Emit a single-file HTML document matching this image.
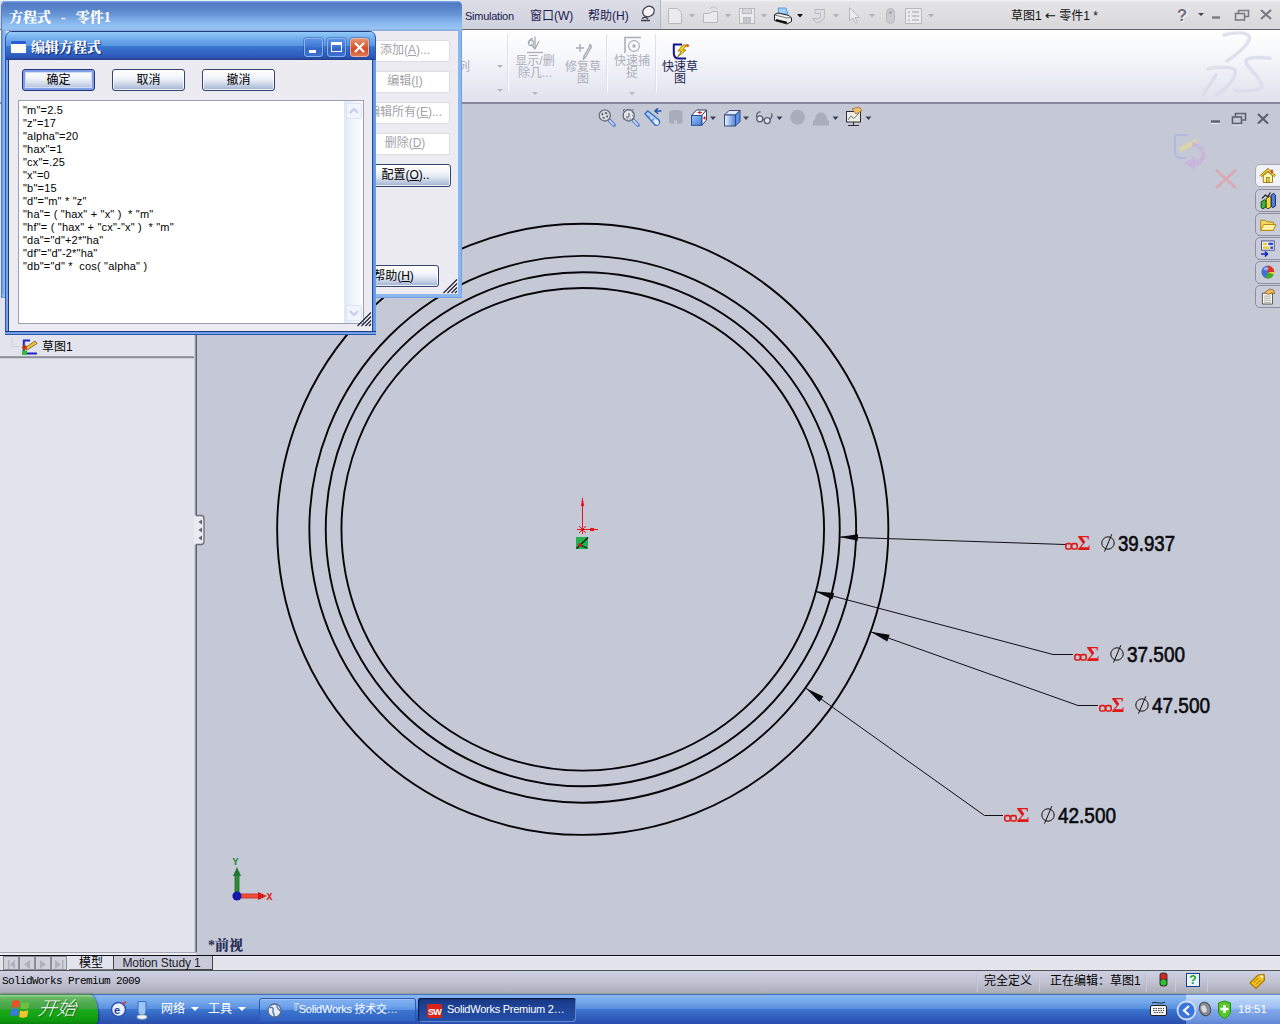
<!DOCTYPE html>
<html><head><meta charset="utf-8">
<style>
html,body{margin:0;padding:0;}
body{width:1280px;height:1024px;overflow:hidden;position:relative;background:#c5c9d6;font-family:"Liberation Sans","Noto Sans CJK SC",sans-serif;font-size:12px;color:#000;}
.abs,.abs-all *{position:absolute;}
div,span,svg{position:absolute;box-sizing:border-box;}
#menubar{left:0;top:0;width:1280px;height:30px;background:linear-gradient(#f4f4f6 0,#e4e4e6 2px,#d8d8dc);border-bottom:1px solid #606168;}
#menuleft{left:0;top:0;width:661px;height:29px;background:linear-gradient(#dcdde6,#cfd1dd);border-right:1px solid #b5b6c0;}
.menutxt{top:9px;color:#1b2050;font-size:12px;line-height:14px;white-space:nowrap;}
#toolbar{left:0;top:30px;width:1280px;height:74px;background:linear-gradient(#ffffff 0%,#f6f7fb 35%,#e6e8f1 80%,#dfe1ec 100%);border-bottom:2px solid #85879a;}
.tbsep{top:8px;height:58px;background:#dfe1ea;border-right:1px solid #fbfbff;width:2px;}
.tbl{color:#a9abb3;font-size:12px;line-height:13px;text-align:center;white-space:nowrap;}
#viewport{left:197px;top:104px;width:1083px;height:852px;background:#c5c9d6;}
#leftpanel{left:0;top:104px;width:197px;height:849px;border-bottom:1px solid #a4a6b2;background:linear-gradient(90deg,#e1e4ed 0,#e1e4ed 194px,#b8bac8 195px,#6a6c78 196px,#54565f 197px);}
#tabbar{left:0;top:955px;width:1280px;height:16px;background:linear-gradient(#f0f2f8 0,#e2e4ec 2px,#e4e6ec 100%);border-top:1px solid #0c0c14;}
#statusbar{left:0;top:970px;width:1280px;height:24px;background:linear-gradient(#cdd0e0 0,#c8cadc 5px,#bfc1d0 12px,#b2b4c0 18px,#adafb8 21px,#929c9f 23px);border-top:1px solid #50525c;}
#taskbar{left:0;top:994px;width:1280px;height:30px;background:linear-gradient(#2a4aa8 0,#86b6f0 1.5px,#7cb0ee 5px,#6a9fe6 10px,#5a8fe0 14.5px,#3b76cf 15.5px,#3568c4 20px,#2d57b6 26px,#2a4eae 30px);}

#dlg1{left:2px;top:0;width:460px;height:298px;background:#ecebf1;border:0;border-radius:6px 6px 0 0;box-shadow:-1px 0 0 #5a7cc0;}
#dlg1 .tb{left:0;top:0;width:460px;height:30.5px;border-radius:6px 6px 0 0;background:linear-gradient(#86aae4 0,#7ea4e2 1.5px,#5078c2 3px,#5a86cc 9px,#6896d6 15px,#78a6e2 18px,#8cbaf0 24px,#98c4f4 29px,#88ace0 30px);}
#dlg1 .tt{left:7px;top:9.5px;font-family:"Liberation Serif","Noto Serif CJK SC",serif;font-weight:900;font-size:14px;line-height:16px;color:#fff;white-space:pre;letter-spacing:0px;word-spacing:6.5px;}
#dlg1 .bl{left:0;top:30px;width:4px;height:268px;background:linear-gradient(90deg,#6a94dc,#8cb8f0 50%,#8cb8f0);}
#dlg1 .br{left:456px;top:30px;width:4px;height:268px;background:linear-gradient(90deg,#8cb8f0,#8cb8f0 60%,#6a94dc);}
#dlg1 .bb{left:0;top:294px;width:460px;height:4px;background:linear-gradient(#8cb8f0,#8cb8f0 60%,#6a94dc);}
.dbtn{left:358px;width:90px;height:22px;background:#fff;border:1px solid #dedce4;border-radius:2px;color:#a3a3a8;font-size:12px;line-height:19px;text-align:center;white-space:nowrap;overflow:hidden;}
.xbtn{height:22px;border:1px solid #34446a;border-radius:3px;background:linear-gradient(#ffffff 0%,#f4f6fa 35%,#dfe5f0 58%,#bcc9e0 82%,#9cafd2 100%);box-shadow:inset 0 0 0 1px rgba(255,255,255,.8);font-size:12px;line-height:20px;text-align:center;color:#000;white-space:nowrap;}
#dlg2{left:5px;top:31px;width:371px;height:304px;background:#ecebf1;border-radius:7px 7px 0 0;}
#dlg2 .tb{left:0;top:0;width:371px;height:29px;border-radius:7px 7px 0 0;box-shadow:inset 1px 0 0 #2a58b0,inset -1px 0 0 #2a58b0;background:linear-gradient(#1c3c80 0,#1c3c80 1px,#92c8f8 1.5px,#7ab4f0 6px,#6aa4ea 10px,#5a98e4 14.5px,#3a78d0 15.5px,#3468c6 20px,#2e5cbc 25px,#2a50b0 27px,#243c80 29px);}
#dlg2 .tt{left:26px;top:9px;font-family:"Liberation Serif","Noto Serif CJK SC",serif;font-weight:900;font-size:14px;line-height:16px;color:#fff;white-space:nowrap;text-shadow:1px 1px 1px #0c2878;}
#dlg2 .bl{left:0;top:29px;width:4px;height:275px;background:linear-gradient(90deg,#2a58b0 0,#2a58b0 1px,#6e9ae4 1px,#86aaec 3px,#1c3c80 3px,#1c3c80 4px);}
#dlg2 .br{left:367px;top:29px;width:4px;height:275px;background:linear-gradient(90deg,#1c3c80 0,#2a58b0 1px,#5a90e0 1px,#6aa0e8 3.5px,#3a6cc8 4px);}
#dlg2 .bb{left:0;top:300px;width:371px;height:4px;background:linear-gradient(#1c3c80 0,#1c3c80 1px,#6e9ae4 1px,#7ea4e8 3px,#2a58b0 3px,#2a58b0 4px);}
.cap{top:7px;width:19px;height:19px;border:1px solid #86b2f0;border-radius:3px;background:linear-gradient(#5c92e4 0,#4078d6 45%,#3566c6 55%,#3c70d0 100%);box-shadow:0 0 0 1px rgba(30,60,140,.35);}
#ta{left:13px;top:69px;width:346px;height:224px;background:#fff;border:1px solid #9aa0b4;}
#ta pre{position:absolute;left:4px;top:3px;margin:0;font-family:"Liberation Sans",sans-serif;font-size:11px;line-height:13px;color:#000;letter-spacing:0.2px;}

.dd{width:0;height:0;border-left:3px solid transparent;border-right:3px solid transparent;border-top:3px solid #b4b6c0;}
.tl{color:#adafb8;font-size:12px;line-height:12px;margin-top:1px;white-space:nowrap;text-align:center;}
#lp-line{left:0;top:356px;width:194px;height:3px;background:linear-gradient(#a2a4ae,#8d8f99 50%,#eef0f6);}
.navb{top:0px;width:16px;height:14px;background:#cfd1db;border:1px solid #8b8d98;}
.tab{top:0;height:14px;font-size:12px;line-height:14px;text-align:center;white-space:nowrap;}
.sbt{top:1.5px;font-size:12px;line-height:16px;white-space:nowrap;color:#000;}
.sbsep{top:3px;width:2px;height:18px;border-left:1px solid #b8bac8;border-right:1px solid #d0d2de;opacity:.7;}
.tkb{top:4px;height:24px;border-radius:3px;color:#fff;font-size:11px;letter-spacing:-0.250px;line-height:23px;white-space:nowrap;overflow:hidden;}
</style></head>
<body>
<div id="menubar"><div id="menuleft"></div>
<span class="menutxt" style="left:465px;font-size:11px;letter-spacing:-0.25px;">Simulation</span>
<span class="menutxt" style="left:530px;">窗口(W)</span>
<span class="menutxt" style="left:588px;">帮助(H)</span>
<span class="menutxt" style="left:1011px;color:#111;">草图1 <span style="position:static;font-family:'DejaVu Sans',sans-serif;font-size:13px;line-height:12px;">←</span> 零件1 *</span>
</div>
<div id="toolbar"></div>
<div id="leftpanel"></div>
<div id="viewport"></div><div style="left:0;top:953px;width:196px;height:2px;background:#eceef4;"></div>
<svg id="vp" style="left:0;top:0;" width="1280" height="1024" viewBox="0 0 1280 1024">
<g fill="none" stroke="#05050a" stroke-width="1.9">
<circle cx="582.75" cy="529.3" r="305.6"/>
<circle cx="582.75" cy="529.3" r="273.4"/>
<circle cx="582.75" cy="529.3" r="257"/>
<circle cx="582.75" cy="529.3" r="241.3"/>
</g>
<g fill="none" stroke="#101014" stroke-width="1">
<polyline points="839,537 1065,544.5 1067,544.5"/>
<polyline points="815,591.3 1053,654.5 1073,654.5"/>
<polyline points="870.5,631.7 1078,705.5 1098,705.5"/>
<polyline points="806,688.3 984.5,815.5 1003,815.5"/>
</g>
<g fill="#0a0a0e" stroke="none">
<polygon points="839,537 858,534.2 858,540.8"/>
<polygon points="815,591.3 834.2,592.9 832.4,599.5"/>
<polygon points="870.5,631.7 889.6,634.8 887.3,641.4"/>
<polygon points="806,688.3 823.4,696.5 819.4,702.1"/>
</g>
<g font-family="'Liberation Sans',sans-serif" font-size="21.5" fill="#08080c" stroke="#08080c" stroke-width="0.6">
<text x="1118" y="550.5" textLength="57" lengthAdjust="spacingAndGlyphs">39.937</text>
<text x="1127" y="661.5" textLength="58" lengthAdjust="spacingAndGlyphs">37.500</text>
<text x="1152" y="712.5" textLength="58" lengthAdjust="spacingAndGlyphs">47.500</text>
<text x="1058" y="822.5" textLength="58" lengthAdjust="spacingAndGlyphs">42.500</text>
</g>
<g fill="none" stroke="#111" stroke-width="1">
<g transform="translate(1108,543)"><circle r="6.2"/><line x1="-3.5" y1="8.600" x2="3.800" y2="-8.800"/></g>
<g transform="translate(1117,654)"><circle r="6.2"/><line x1="-3.5" y1="8.600" x2="3.800" y2="-8.800"/></g>
<g transform="translate(1142,705)"><circle r="6.2"/><line x1="-3.5" y1="8.600" x2="3.800" y2="-8.800"/></g>
<g transform="translate(1048,815)"><circle r="6.2"/><line x1="-3.5" y1="8.600" x2="3.800" y2="-8.800"/></g>
</g>
<g font-family="'Liberation Serif',serif" font-weight="bold" fill="#e01818" font-size="20">
<text x="1077.5" y="550">Σ</text><text x="1086.5" y="661">Σ</text><text x="1111.5" y="712">Σ</text><text x="1016.5" y="822">Σ</text>
</g>
<g fill="none" stroke="#e01818" stroke-width="1.6">
<g transform="translate(1065,541)"><rect x="0.8" y="2.6" width="5.4" height="5.4" rx="1.6"/><rect x="6.8" y="2.6" width="5.4" height="5.4" rx="1.6"/></g>
<g transform="translate(1074,652)"><rect x="0.8" y="2.6" width="5.4" height="5.4" rx="1.6"/><rect x="6.8" y="2.6" width="5.4" height="5.4" rx="1.6"/></g>
<g transform="translate(1099,703)"><rect x="0.8" y="2.6" width="5.4" height="5.4" rx="1.6"/><rect x="6.8" y="2.6" width="5.4" height="5.4" rx="1.6"/></g>
<g transform="translate(1004,813)"><rect x="0.8" y="2.6" width="5.4" height="5.4" rx="1.6"/><rect x="6.8" y="2.6" width="5.4" height="5.4" rx="1.6"/></g>
</g>
<!-- origin -->
<g stroke="#e8141c" stroke-width="1" fill="#e8141c">
<line x1="582.5" y1="498" x2="582.5" y2="534"/>
<line x1="577" y1="529.5" x2="598" y2="529.5"/>
<line x1="579" y1="526" x2="586" y2="533"/><line x1="586" y1="526" x2="579" y2="533"/>
<polygon points="582.5,497 584.2,506 580.8,506" stroke="none"/>
<rect x="590" y="528" width="4" height="3" stroke="none"/>
</g>
<rect x="576" y="537" width="12" height="12" fill="#22b14c"/>
<path d="M576.5 548.5 L588 537.5 M580 545 L587 548" stroke="#111" stroke-width="1.2" fill="none"/>
<circle cx="580" cy="545" r="2" fill="#c0281c"/>
<!-- triad -->
<rect x="235" y="875" width="4" height="21" fill="#2e8b3a" stroke="#1c6a28" stroke-width="0.8"/>
<polygon points="237,867 241,876 233,876" fill="#1f7a2c"/>
<rect x="239" y="894" width="20" height="4" fill="#f05038" stroke="#d02020" stroke-width="0.8"/>
<polygon points="267,896 258,892 258,900" fill="#d81818"/>
<circle cx="237" cy="896" r="4.6" fill="#1418a8"/>
<text x="232.5" y="865" font-family="'Liberation Mono',monospace" font-size="10" font-weight="bold" fill="#1f8a34">Y</text>
<text x="266.5" y="900" font-family="'Liberation Mono',monospace" font-size="10" font-weight="bold" fill="#e01818">X</text>
<text x="208" y="950" font-family="'Liberation Serif','Noto Serif CJK SC',serif" font-size="14" font-weight="900" fill="#2a2f58">*前视</text>
</svg>
<div id="tabbar"></div>
<div id="statusbar"></div>
<div id="taskbar"></div>


<!-- toolbar content -->
<div id="tbc" style="left:0;top:0;width:1280px;height:103px;">
<span class="tl" style="left:458px;top:60px;">列</span>
<div class="dd" style="left:497px;top:65px;"></div><div class="dd" style="left:497px;top:89px;"></div>
<div class="tbsep" style="left:507px;top:34px;"></div>
<div class="tbsep" style="left:606px;top:34px;"></div>
<div class="tbsep" style="left:655px;top:34px;"></div>
<span class="tl" style="left:515px;top:54px;width:40px;">显示/删<br>除几...</span>
<div class="dd" style="left:532px;top:92px;"></div>
<span class="tl" style="left:564px;top:60px;width:38px;">修复草<br>图</span>
<span class="tl" style="left:613px;top:54px;width:38px;">快速捕<br>捉</span>
<div class="dd" style="left:629px;top:92px;"></div>
<span class="tl" style="left:661px;top:60px;width:38px;color:#1a1f50;">快速草<br>图</span>
<svg style="left:524px;top:35px" width="22" height="20"><g fill="none" stroke="#a9abb5" stroke-width="1.3"><path d="M3 17.5H19"/><path d="M11 14.5V1.5M7 9.5L11 14M15 6L11 14"/><circle cx="7" cy="8" r="2.6"/><path d="M9 3.5C6 4 5 6 5 8"/></g></svg>
<svg style="left:573px;top:42px" width="22" height="20"><g fill="none" stroke="#a9abb5" stroke-width="1.4"><path d="M3 6H11M7 2V10"/><path d="M17 2.5C18.5 3.5 18.5 5 17.5 6.5L12.5 15L10.5 17L11 14L16 5.5Z"/></g></svg>
<svg style="left:622px;top:35px" width="22" height="20"><g fill="none" stroke="#a9abb5" stroke-width="1.5"><path d="M3 18V2.5H19"/><circle cx="12" cy="11" r="5.4" stroke-width="1.2"/></g><circle cx="12" cy="11" r="1.7" fill="#a9abb5"/></svg>
<svg style="left:670px;top:43px" width="22" height="18"><path d="M3 1.5H12M3.8 1.5V10C3.8 14 6 15.6 9 15.6H16" fill="none" stroke="#14148c" stroke-width="2"/><path d="M13 2L8 8H11.5L7.5 14L16 7H12.5L17 2Z" fill="#ffd816" stroke="#8a6a00" stroke-width="0.8"/><circle cx="17.5" cy="2.5" r="1.6" fill="#e06018"/></svg>
<!-- menubar icons -->
<svg style="left:636px;top:3px" width="22" height="22"><ellipse cx="12.5" cy="8.5" rx="6" ry="5" transform="rotate(-30 12.5 8.5)" fill="#f4f4f8" stroke="#3a3c4a" stroke-width="1.2"/><path d="M6 15.5C8 14 10.5 14.5 12 16M5 17.5H14" stroke="#3a3c4a" stroke-width="1.3" fill="none"/></svg>
<g></g>
<svg style="left:660px;top:1px" width="290" height="28"><g fill="#ebebee" stroke="#b9b9c0" stroke-width="1">
<path d="M8.5 7.5H17.5L21.5 11.5V22.5H8.5Z"/>
<path d="M43.500 12.500H50L52 10.500H57.500V21.500H43.500Z"/><path d="M50 8C52 5 55 5 57 8" fill="none"/>
<rect x="79.500" y="7.500" width="15" height="15"/><rect x="82.500" y="7.500" width="9" height="5" fill="#d4d4da"/><rect x="83.500" y="16.500" width="7" height="6" fill="#c4c4cc"/>
<path d="M155 8.500H164.500V14.500C164.500 19 161 21.500 156.500 21.500L152.500 17.500L158 17.500C160 17.500 160.500 16 160.500 14.500V12.500H155Z" fill="#dcdce0"/>
<path d="M189.500 6.500V20L193 17L195.500 22.500L197.500 21.500L195 16.500H199.500Z"/>
<rect x="226.500" y="7.500" width="8" height="15" rx="4" fill="#c9c9cf"/><circle cx="230.500" cy="11.500" r="1.600" fill="#a8a8b0" stroke="none"/>
<rect x="245.500" y="7.500" width="16" height="15"/><path d="M248 11H250M252 11H259M248 15H250M252 15H259M248 19H250M252 19H259" stroke="#a0a0a8"/>
</g>
<g fill="#b0b0b8"><path d="M29 13H35L32 16.500Z"/><path d="M65 13H71L68 16.500Z"/><path d="M101 13H107L104 16.500Z"/><path d="M173 13H179L176 16.500Z"/><path d="M209 13H215L212 16.500Z"/><path d="M268 13H274L271 16.500Z"/></g>
<path d="M137 13H143L140 16.500Z" fill="#111"/>
<g><path d="M118 7L126 7L128 13L119 13Z" fill="#9fd0f8" stroke="#4a8ad0" stroke-width="0.8"/><path d="M114.500 13.500L118 12L129 14.500L131.500 17V20.500L127 23L114.500 19.500Z" fill="#f2f2f2" stroke="#222" stroke-width="1"/><path d="M116 19L127 21.800" stroke="#111" stroke-width="2"/><path d="M115 14L127 17L131 16.500" stroke="#555" stroke-width="0.8" fill="none"/></g>
</svg>
<!-- right caption -->
<span style="left:1177px;top:6px;font-size:16.5px;font-weight:bold;color:#707078;line-height:18px;text-shadow:1px 1px 0 #f8f8f8;">?</span>
<div class="dd" style="left:1198px;top:13px;border-top-color:#444;"></div>
<svg style="left:1208px;top:6px" width="66" height="18"><g fill="none" stroke="#7a7a82" stroke-width="1.6"><path d="M4 11.500H12" stroke-width="2.400"/><rect x="27.500" y="7.500" width="9" height="6.500"/><path d="M30.500 7V4.500H40.500V10.500H37" /><path d="M53 4L63 13M63 4L53 13" stroke-width="2.200"/></g></svg>
<!-- DS logo -->
<svg style="left:1180px;top:28px" width="100" height="76"><g fill="none" stroke="#dadcea" stroke-linecap="round" stroke-linejoin="round" opacity="0.850"><path d="M44 7C54 4 66 4 69 8C72 14 58 26 47 33" stroke-width="3.400"/><path d="M28 40.600C40 38.500 52 39 55 42C57 48 48 60 36 67" stroke-width="3.400"/><path d="M36 47L23 67" stroke-width="3.400"/><path d="M90 30.500C80 28.500 70 29.500 66 32C64 38 82 50 82 58C80 63 66 64 55 62.500" stroke-width="3.400"/></g></svg>
</div>
<!-- left panel content -->
<div id="lp-line"></div>
<span style="left:42px;top:340px;font-size:12px;line-height:14px;white-space:nowrap;">草图1</span>
<svg style="left:9px;top:337px" width="32" height="20"><path d="M3 1V9.500H11" stroke="#b8bac4" stroke-width="1" stroke-dasharray="1 1" fill="none"/><path d="M14 3.500H21M14.800 3.500V16.500H28" stroke="#1c22c8" stroke-width="2" fill="none"/><path d="M16 11L26 4L28 6.500L18 13Z" fill="#f0c040" stroke="#7a5a10" stroke-width="0.800"/><circle cx="15.500" cy="10.500" r="2.400" fill="#b83818"/><rect x="13" y="13.500" width="5" height="4.500" fill="#38b838"/></svg>
<!-- splitter handle -->
<svg style="left:192px;top:513px" width="16" height="34"><path d="M2 2.500H9C11 2.500 12 3.500 12 5.500V28.500C12 30.500 11 31.500 9 31.500H2Z" fill="#e9ebf2"/><path d="M4 2.500H9C11 2.500 12 3.500 12 5.500V28.500C12 30.500 11 31.500 9 31.500H4" fill="none" stroke="#6a6c7a" stroke-width="1.300"/><g fill="#5f6170"><path d="M6.500 9L10 6.500V11.500Z"/><path d="M6.500 17L10 14.500V19.500Z"/><path d="M6.500 25L10 22.500V27.500Z"/></g></svg>

<!-- tabbar content -->
<div style="left:0;top:956px;width:1280px;height:15px;">
<div class="navb" style="left:3px;"></div><div class="navb" style="left:19px;"></div><div class="navb" style="left:35px;"></div><div class="navb" style="left:51px;"></div>
<svg style="left:3px;top:1px" width="66" height="15"><g fill="#aeb0bc" stroke="none"><path d="M5 3H6.500V12H5ZM12 3V12L7 7.500Z"/><path d="M27 3V12L21 7.500Z"/><path d="M37 3V12L43 7.500Z"/><path d="M59 3H60.500V12H59ZM52 3V12L58 7.500Z"/></g></svg>
<div class="tab" style="left:69px;width:45px;background:#e1e4ed;border-right:1px solid #444;border-bottom:1px solid #777;">模型</div>
<div class="tab" style="left:114px;width:99px;background:#c9ccd8;border:1px solid #444;border-top:0;border-left:0;color:#1a1a2a;font-size:12px;letter-spacing:-0.150px;text-indent:-3px;">Motion Study 1</div>
</div>
<!-- statusbar content -->
<div style="left:0;top:971px;width:1280px;height:23px;">
<span style="left:2px;top:3px;font-family:'Liberation Mono',monospace;font-size:11px;letter-spacing:-0.6px;line-height:14px;white-space:nowrap;color:#000;">SolidWorks Premium 2009</span>
<span class="sbt" style="left:984px;">完全定义</span>
<span class="sbt" style="left:1050px;">正在编辑：草图1</span>
<div class="sbsep" style="left:976px;"></div><div class="sbsep" style="left:1038px;"></div><div class="sbsep" style="left:1145px;"></div><div class="sbsep" style="left:1174px;"></div><div class="sbsep" style="left:1206px;"></div>
<svg style="left:1157px;top:1px" width="14" height="16"><rect x="2.500" y="0.500" width="8" height="14" rx="3" fill="#3a3a3a"/><circle cx="6.500" cy="4.500" r="3" fill="#e02020"/><circle cx="6.500" cy="10.500" r="3" fill="#28c828"/></svg>
<div style="left:1186px;top:2px;width:14px;height:14px;background:#e8f4ff;border:1px solid #1c3c8c;color:#18a018;font-weight:bold;font-size:12px;line-height:12px;text-align:center;">?</div>
<svg style="left:1247px;top:0" width="20" height="20"><path d="M3 12L11 4L17 3.500L17.500 9L9 17.500Z" fill="#f2c020" stroke="#a87800" stroke-width="1.200"/><path d="M7 11.500L11.500 7M9 13.500L13.500 9" stroke="#a87800" stroke-width="1"/><circle cx="15" cy="5.500" r="1.200" fill="#fff"/></svg>
</div>
<!-- taskbar content -->
<div style="left:0;top:994px;width:1280px;height:30px;">
<div style="left:0;top:0;width:98px;height:30px;border-radius:0 9px 4px 0 / 0 22px 4px 0;background:linear-gradient(#2a6a3a 0,#8ed08e 1.5px,#62b862 4px,#4caa4c 10px,#44a444 14.5px,#1ea81e 15.5px,#12a412 22px,#0e960e 27px,#0b800b 30px);box-shadow:1px 0 2px rgba(0,0,60,.45);"></div>
<span style="left:38px;top:2px;font-family:'Liberation Sans','Noto Sans CJK SC',sans-serif;font-style:italic;font-weight:300;font-size:19px;line-height:26px;color:#fff;text-shadow:1px 1px 1px #1a5a1a;white-space:nowrap;letter-spacing:0;transform:skewX(-8deg);">开始</span>
<svg style="left:6px;top:3px" width="26" height="24"><g transform="skewX(-8) translate(4,0)"><path d="M3 4C6 2.500 8 3 10.500 4.500V11C8 9.500 6 9.500 3 11Z" fill="#e8502c"/><path d="M12 5C14.500 6 17 6 20 4.500V11C17 12.500 14.500 12.500 12 11.500Z" fill="#6cc040"/><path d="M3 12.500C6 11 8 11.500 10.500 13V19.500C8 18 6 18 3 19.500Z" fill="#3c78e0"/><path d="M12 13.500C14.500 14.500 17 14.500 20 13V19.500C17 21 14.500 21 12 20Z" fill="#f4c430"/></g></svg>
<svg style="left:108px;top:5px" width="44" height="22"><circle cx="10.500" cy="10.500" r="7" fill="#e8f0fc" stroke="#2c54a8" stroke-width="1.500"/><text x="6" y="14.500" font-family="'Liberation Sans',sans-serif" font-weight="bold" font-size="11" fill="#2040a0">e</text><path d="M14 5L18 3" stroke="#e03030" stroke-width="1.500"/><path d="M30 2.500H38V12C38 15 36 16 34 16C32 16 30 15 30 12Z" fill="#9cc4f4" stroke="#3a6cc8" stroke-width="1"/><ellipse cx="34" cy="18" rx="5" ry="2.200" fill="#f4f6fa" stroke="#8aa"/></svg>
<span style="left:161px;top:8px;color:#fff;font-size:12px;line-height:14px;white-space:nowrap;">网络</span>
<div class="dd" style="left:191px;top:13px;border-top-color:#fff;border-left-width:4px;border-right-width:4px;border-top-width:4px;"></div>
<span style="left:208px;top:8px;color:#fff;font-size:12px;line-height:14px;white-space:nowrap;">工具</span>
<div class="dd" style="left:238px;top:13px;border-top-color:#fff;border-left-width:4px;border-right-width:4px;border-top-width:4px;"></div>
<div class="tkb" style="left:259px;width:157px;background:linear-gradient(#86b4f2 0,#6ea2ec 35%,#5c92e4 48%,#3b76d0 52%,#3060c0 100%);box-shadow:inset 0 0 0 1px #2c58b4,inset 1px 2px 0 rgba(200,225,255,.35);padding-left:29px;">『SolidWorks 技术交…</div>
<svg style="left:266px;top:8px" width="18" height="18"><circle cx="8.500" cy="8.500" r="6.500" fill="#e8eef8" stroke="#5a6a8a" stroke-width="1.300"/><path d="M4 6C6 4 8 7 7 9C6 11 9 11 8 14M11 3.500C10 6 13 7 14 9" stroke="#4a6aa8" stroke-width="1.300" fill="none"/></svg>
<div class="tkb" style="left:418px;width:158px;background:linear-gradient(#17357f 0,#1d4193 30%,#214aa0 70%,#2450aa 100%);box-shadow:inset 1px 1px 1px rgba(0,0,30,.7),inset -1px -1px 0 rgba(160,190,240,.5);padding-left:29px;">SolidWorks Premium 2…</div>
<svg style="left:426px;top:9px" width="18" height="16"><rect x="1" y="1" width="15" height="14" rx="2" fill="#d82418"/><text x="2" y="12" font-family="'Liberation Sans',sans-serif" font-weight="bold" font-size="9" fill="#fff" letter-spacing="-0.800">SW</text></svg>
<div style="left:1186px;top:0;width:94px;height:30px;background:linear-gradient(#3a5ab0 0,#c8defc 1.5px,#b4d0f8 6px,#9cbef2 14px,#82a8ea 16px,#7098e0 24px,#6086d2 30px);"></div>
<svg style="left:1148px;top:6px" width="22" height="18"><path d="M4 3C8 1 12 5 17 2" stroke="#222" stroke-width="1" fill="none"/><rect x="2.500" y="5.500" width="16" height="10" rx="1.500" fill="#f4f4f4" stroke="#222"/><path d="M5 8.500H16M5 10.500H16M6 12.500H15" stroke="#444" stroke-width="1" stroke-dasharray="1.500 1"/></svg>
<svg style="left:1174px;top:4px" width="64" height="24"><circle cx="12.500" cy="12.500" r="9" fill="#3c74dc" stroke="#cfe0fc" stroke-width="1.800"/><path d="M15 8L10 12.500L15 17" stroke="#fff" stroke-width="2.200" fill="none"/><ellipse cx="31" cy="11" rx="5.500" ry="7" fill="#8a8c94" stroke="#4a4c54" transform="rotate(-20 31 11)"/><ellipse cx="30" cy="11" rx="2.500" ry="3.800" fill="#d8dae0" transform="rotate(-20 30 11)"/><path d="M44.500 5L50.500 3L56.500 5V13C56.500 17 53 19 50.500 20.500C48 19 44.500 17 44.500 13Z" fill="#58c828" stroke="#2a8a10"/><path d="M50.500 7V15M46.500 11H54.500" stroke="#fff" stroke-width="2.400"/></svg>
<span style="left:1238px;top:8px;color:#fff;font-size:11.5px;line-height:14px;white-space:nowrap;">18:51</span>
</div>

<!-- heads-up view toolbar -->
<svg style="left:590px;top:104px" width="300" height="32">
<defs><linearGradient id="cb1" x1="0" y1="0" x2="1" y2="1"><stop offset="0" stop-color="#9cc4f4"/><stop offset="1" stop-color="#3f7cdc"/></linearGradient><linearGradient id="cb2" x1="0" y1="0" x2="1" y2="0"><stop offset="0" stop-color="#f0f5fd"/><stop offset="1" stop-color="#4a82e2"/></linearGradient></defs>
<g fill="none">
<path d="M19 16L24 21" stroke="#4a78c8" stroke-width="3.600" stroke-linecap="round"/><path d="M19.500 16.500L23.700 20.700" stroke="#e4eefc" stroke-width="1.500" stroke-linecap="round"/>
<circle cx="14.800" cy="11.400" r="5.600" fill="#d6dae2" stroke="#6a6e7a" stroke-width="1.300"/><circle cx="14.800" cy="11.400" r="2.700" stroke="#4a4e5a" stroke-width="1.500" stroke-dasharray="2.100 2.100"/>
<path d="M43 16L48 21" stroke="#4a78c8" stroke-width="3.600" stroke-linecap="round"/><path d="M43.500 16.500L47.700 20.700" stroke="#e4eefc" stroke-width="1.500" stroke-linecap="round"/>
<circle cx="38.700" cy="11.400" r="5.600" fill="#e2e5ec" stroke="#6a6e7a" stroke-width="1.300"/><rect x="33.500" y="5.500" width="9.500" height="9.500" stroke="#555966" stroke-width="0.900" stroke-dasharray="1.500 1.500"/><path d="M39 9V13H36" stroke="#555966" stroke-width="1"/>
<path d="M55 9.800L57.800 7L68.500 15.500C71 18 68.500 22.500 65 21Z" fill="#b8d6f8" stroke="#3a6cc8" stroke-width="1.400"/><path d="M60 11.500L57.500 14M64 14.500L61 17.500" stroke="#3a6cc8" stroke-width="1"/><ellipse cx="66.500" cy="18.300" rx="1.800" ry="2.600" transform="rotate(-45 66.500 18.300)" fill="#eaf3ff"/>
<path d="M71.500 7H65M68 4.300L65 7L68 9.700" stroke="#2a54b0" stroke-width="1.500"/>
</g>
<path d="M79 8.500C79 5.300 92.500 5.300 92.500 8.500V17.500C92.500 19.300 89.500 20 87 20V16.500H84V20C81 19.800 79 19 79 17.500Z" fill="#a9acba"/>
<g stroke="#3c4460" stroke-width="1"><path d="M101.500 11.500L106.500 6H116.500L111.800 11.500Z" fill="#f6f8fc"/><path d="M111.800 11.500L116.500 6V16L111.800 21.300Z" fill="#f6f8fc"/><rect x="101.500" y="11.500" width="10.300" height="9.800" fill="url(#cb1)" stroke="#2a4a94"/><path d="M107.500 8.500H112M109.800 6.800V10.300M113 14H116M114.500 12.500V15.500" stroke="#d42020" stroke-width="1.100"/></g>
<g stroke="#3a4a78" stroke-width="1"><path d="M134.500 11L139 6.500H150L145.500 11Z" fill="#dfeafa"/><path d="M145.500 11L150 6.500V17.500L145.500 22Z" fill="#5a90e8"/><rect x="134.500" y="11" width="11" height="11" fill="url(#cb2)"/></g>
<g fill="#dfe4f0" stroke="#5a5e6e" stroke-width="1.300"><circle cx="169.800" cy="14.800" r="3"/><circle cx="177.200" cy="16.600" r="3"/><path d="M172.800 15.200L174.300 15.800M167 13.500C166 10 168 7.500 170.500 8M180 15.500C182.500 13 182.500 10.500 181 9.500" fill="none"/></g>
<circle cx="207.600" cy="13.300" r="7.500" fill="#aaadbc"/>
<path d="M223 17L225.500 14C225 6.500 237 6.500 236.500 14L239 17V21.500H223Z" fill="#aaadbc"/>
<g><rect x="256.500" y="7.500" width="14" height="10.500" fill="#eceee6" stroke="#2c2c34"/><path d="M258 16L261 12L264 14.500L269 9" stroke="#6a7a6a" fill="none"/><path d="M262 5L269 3L272 6.500L266 10Z" fill="#f0c070" stroke="#9a6a20" stroke-width="0.800"/><path d="M258 21.500H269M263.500 18V21.500" stroke="#2c2c34"/></g>
<g fill="#3c4054"><path d="M120 12.500H126L123 16Z"/><path d="M153 12.500H159L156 16Z"/><path d="M186.500 12.500H192.500L189.500 16Z"/><path d="M242.500 12.500H248.500L245.500 16Z"/><path d="M275.500 12.500H281.500L278.500 16Z"/></g>
</svg>
<!-- MDI controls -->
<svg style="left:1205px;top:108px" width="70" height="22"><g fill="none" stroke="#5f616c" stroke-width="1.600"><path d="M6 13.500H15" stroke-width="2.400"/><rect x="27.500" y="9" width="9" height="6.500"/><path d="M30.500 8.500V5.500H40.500V12H37.500"/><path d="M53 6L63 15.500M63 6L53 15.500" stroke-width="2.200"/></g><g fill="none" stroke="#fff" stroke-width="0.800" opacity="0.700"><path d="M6 15.500H15M27 17H37M54 17L56 17"/></g></svg>
<!-- confirm corner -->
<svg style="left:1168px;top:130px" width="74" height="66"><g fill="none" stroke="#b4b8dc" stroke-width="2.200"><path d="M7 5H20M7 5V22C7 26 10 28 14 28H18"/></g><path d="M11 18L28 9L30 13L13 22Z" fill="#dcd6a4"/><path d="M24 17C36 17 36 30 27 31L27 26L16 33L27 40L27 36C42 34 40 14 24 12Z" fill="#c8b4dc" opacity="0.900"/><path d="M48 40L68 58M68 40L48 58" stroke="#d9aab4" stroke-width="3" fill="none"/></svg>
<!-- task pane tabs -->
<div style="left:1255px;top:164px;width:26px;height:23px;background:#f1f2f7;border:1px solid #a8aabb;border-radius:5px 0 0 5px;"></div>
<div style="left:1255px;top:189px;width:26px;height:23px;background:#c9ccd9;border:1px solid #8c8ea0;border-radius:5px 0 0 5px;"></div>
<div style="left:1255px;top:213px;width:26px;height:23px;background:#c9ccd9;border:1px solid #8c8ea0;border-radius:5px 0 0 5px;"></div>
<div style="left:1255px;top:237px;width:26px;height:23px;background:#c9ccd9;border:1px solid #8c8ea0;border-radius:5px 0 0 5px;"></div>
<div style="left:1255px;top:261px;width:26px;height:23px;background:#c9ccd9;border:1px solid #8c8ea0;border-radius:5px 0 0 5px;"></div>
<div style="left:1255px;top:285px;width:26px;height:23px;background:#c9ccd9;border:1px solid #8c8ea0;border-radius:5px 0 0 5px;"></div>
<svg style="left:1256px;top:164px" width="24" height="146">
<g transform="translate(1.800,2) scale(0.84)"><path d="M3.500 12L12 4.500L20.500 12" fill="none" stroke="#8a6a00" stroke-width="3"/><path d="M3.500 12L12 4.500L20.500 12" fill="none" stroke="#ffe040" stroke-width="1.400"/><path d="M6.500 11.500V19.500H17.500V11.500L12 7Z" fill="#fff8b0" stroke="#8a6a00"/><rect x="10.500" y="13.500" width="3" height="6" fill="#f0d040" stroke="#8a6a00" stroke-width="0.800"/><rect x="15.500" y="4.500" width="2.500" height="4" fill="#d04020"/></g>
<g transform="translate(1.800,26) scale(0.84)"><path d="M4 14L8 11.500L10 13V20L6 22.500L4 21Z" fill="#38b838" stroke="#103010"/><path d="M10 10L14 7.500L16 9V20L12 22.500L10 21Z" fill="#f0d838" stroke="#303010"/><path d="M16 6L19 4L21 6V19L18 21L16 19.500Z" fill="#4a80e0" stroke="#101840"/><path d="M5 10L9 6L12 8L15 3" stroke="#1a1a1a" stroke-width="1.400" fill="none"/></g>
<g transform="translate(1.800,50) scale(0.84)"><path d="M3.500 7.500H9L11 9.500H18.500V19.500H3.500Z" fill="#f8d860" stroke="#a87c00"/><path d="M3.500 19.500L7 12.500H21.500L18.500 19.500Z" fill="#fff0a0" stroke="#a87c00"/></g>
<g transform="translate(1.800,74) scale(0.84)"><rect x="4.500" y="3.500" width="15" height="11" fill="#f4f6fc" stroke="#2a3a8a"/><rect x="6" y="5.500" width="5" height="3" fill="#f0c838"/><rect x="12.500" y="5.500" width="5.500" height="3" fill="#2a4ac0"/><rect x="6" y="10" width="8" height="3" fill="#f0c838"/><rect x="15" y="10" width="3" height="3" fill="#2a4ac0"/><path d="M4 19H11M8.500 16L11.500 19L8.500 22" stroke="#1020c0" stroke-width="1.800" fill="none"/></g>
<g transform="translate(1.800,98) scale(0.84)"><circle cx="12" cy="12" r="7.500" fill="#d83028"/><path d="M12 12L5.500 8C7 5.500 9.500 4.500 12 4.500Z" fill="#3a70e0"/><path d="M12 12V4.500C16 4.500 19.500 8 19.500 12Z" fill="#e03028"/><path d="M12 12L5.500 8C3.500 12 5 17 9 19Z" fill="#3a70e0"/><path d="M12 12L9 19C13 20.500 17 19 19 15Z" fill="#38b030"/><path d="M12 12L19 15C19.500 14 19.500 13 19.500 12Z" fill="#f0d030"/><ellipse cx="10" cy="8" rx="3" ry="2" fill="#fff" opacity="0.450"/></g>
<g transform="translate(1.800,122) scale(0.84)"><path d="M5.500 8.500H17.500V21.500H5.500Z" fill="#f6f6ee" stroke="#444"/><path d="M7.500 12H15.500M7.500 14.500H15.500M7.500 17H15.500M7.500 19.500H15.500" stroke="#8a8a8a" stroke-width="0.800"/><path d="M8 8L14 3.500L19 5L20 9L16 8.500L13 10Z" fill="#f0b860" stroke="#7a5010" stroke-width="0.800"/></g>
</svg>
<div id="dlg1"><div class="tb"></div><span class="tt">方程式 - 零件1</span><div class="bl"></div><div class="br"></div><div class="bb"></div>
<div class="dbtn" style="top:40px;">添加(<u>A</u>)...</div>
<div class="dbtn" style="top:71px;">编辑(<u>I</u>)</div>
<div class="dbtn" style="top:102px;">编辑所有(<u>E</u>)...</div>
<div class="dbtn" style="top:133px;">删除(<u>D</u>)</div>
<div class="xbtn" style="left:358px;top:164px;width:91px;height:23px;line-height:21px;">配置(<u>O</u>)..</div>
<div class="xbtn" style="left:346px;top:265px;width:91px;height:22px;">帮助(<u>H</u>)</div>
<svg style="left:440px;top:278px" width="16" height="16"><path d="M15 1.500L1.500 15M15 5.500L5.500 15M15 9.500L9.500 15M15 13L13 15" stroke="#1c1c38" stroke-width="1.100" fill="none"/></svg>
</div>
<div style="left:0;top:0;width:461px;height:1px;background:#e6f2fa;"></div>
<div id="dlg2"><div class="tb"></div>
<div style="left:6px;top:10px;width:15px;height:12px;background:#fbfbf4;border-top:3px solid #2a5bd0;border-radius:1px;box-shadow:0 0 1px #9bb8f0;"></div>
<span class="tt">编辑方程式</span>
<div class="cap" style="left:299px;"><div style="left:4px;top:11px;width:7px;height:3px;background:#fff;"></div></div>
<div class="cap" style="left:322px;"><div style="left:3px;top:3px;width:11px;height:10px;border:1px solid #fff;border-top:3px solid #fff;"></div></div>
<div class="cap" style="left:345px;background:linear-gradient(#e49472 0,#da5a34 45%,#d44a22 60%,#e07a58 100%);border-color:#eeb09c;"><svg width="17" height="17" style="left:0;top:0"><path d="M4 4L13 13M13 4L4 13" stroke="#fff" stroke-width="2.2"/></svg></div>
<div class="bl"></div><div class="br"></div><div class="bb"></div>
<div class="xbtn" style="left:17px;top:38px;width:73px;height:22px;border-color:#20377a;box-shadow:inset 0 0 0 2px #7f9ee6,inset 0 0 0 3px #cfdcfa;">确定</div>
<div class="xbtn" style="left:107px;top:38px;width:73px;">取消</div>
<div class="xbtn" style="left:197px;top:38px;width:73px;">撤消</div>
<div id="ta"><pre>"m"=2.5
"z"=17
"alpha"=20
"hax"=1
"cx"=.25
"x"=0
"b"=15
"d"="m" * "z"
"ha"= ( "hax" + "x" )  * "m"
"hf"= ( "hax" + "cx"-"x" )  * "m"
"da"="d"+2*"ha"
"df"="d"-2*"ha"
"db"="d" *  cos( "alpha" )</pre>
<div style="left:325px;top:0;width:19px;height:222px;background:linear-gradient(90deg,#dce8fa,#f2f5fc 50%,#fdfdff);"></div>
<div style="left:327px;top:2px;width:16px;height:16px;border:1px solid #dfe4f5;border-radius:2px;background:#f2f4fc;"><svg width="14" height="14" style="left:0;top:0"><path d="M3 9L7 5L11 9" stroke="#c3cbe8" stroke-width="2" fill="none"/></svg></div>
<div style="left:327px;top:204px;width:16px;height:16px;border:1px solid #dfe4f5;border-radius:2px;background:#f2f4fc;"><svg width="14" height="14" style="left:0;top:0"><path d="M3 5L7 9L11 5" stroke="#c3cbe8" stroke-width="2" fill="none"/></svg></div>
</div>
<svg style="left:351px;top:280px" width="16" height="16"><path d="M15 1.500L1.500 15M15 5.500L5.500 15M15 9.500L9.500 15M15 13L13 15" stroke="#1c1c38" stroke-width="1.100" fill="none"/></svg>
</div>
</body></html>
